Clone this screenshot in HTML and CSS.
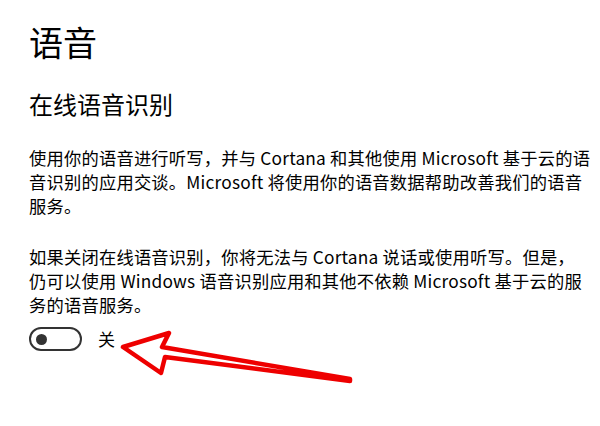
FILE: index.html
```html
<!DOCTYPE html>
<html lang="zh-CN">
<head>
<meta charset="utf-8">
<link rel="stylesheet" href="styles.css">
</head>
<body>
<main class="page">
  <h1 class="title">语音</h1>
  <h2 class="subtitle">在线语音识别</h2>
  <p class="para">使用你的语音进行听写，并与 Cortana 和其他使用 Microsoft 基于云的语<br>音识别的应用交谈。Microsoft 将使用你的语音数据帮助改善我们的语音<br>服务。</p>
  <p class="para">如果关闭在线语音识别，你将无法与 Cortana 说话或使用听写。但是，<br>仍可以使用 Windows 语音识别应用和其他不依赖 Microsoft 基于云的服<br>务的语音服务。</p>
  <div class="toggle-row">
    <span class="toggle"><span class="knob"></span></span>
    <span class="toggle-label">关</span>
  </div>
</main>
<svg class="arrow" width="600" height="426" viewBox="0 0 600 426">
  <polygon points="123,347 169,333 162,347 350,379 350,381 165,357 161,373" fill="#fff" stroke="#ee0000" stroke-width="4.5" stroke-linejoin="round"/>
</svg>
</body>
</html>
```
FILE: styles.css
```css
html, body {
  margin: 0;
  padding: 0;
  background: #fff;
}
body {
  width: 600px;
  height: 426px;
  overflow: hidden;
  position: relative;
  font-family: "Noto Sans CJK SC", "Noto Sans", sans-serif;
  color: #000;
}
.page {
  padding: 22px 0 0 29px;
}
.title {
  margin: 0;
  font-size: 34px;
  line-height: 40px;
  font-weight: 400;
}
.subtitle {
  margin: 26px 0 0;
  font-size: 24px;
  line-height: 32px;
  font-weight: 400;
}
.para {
  margin: 26px 0 0;
  font-size: 17.3px;
  letter-spacing: 0.2px;
  line-height: 24px;
  white-space: nowrap;
}
.para + .para {
  margin-top: 27px;
}
.toggle-row {
  margin-top: 10px;
  display: flex;
  align-items: center;
  gap: 16px;
}
.toggle {
  box-sizing: border-box;
  width: 53px;
  height: 24px;
  border: 2px solid #333;
  border-radius: 12px;
  display: flex;
  align-items: center;
  padding-left: 5px;
}
.knob {
  width: 11px;
  height: 11px;
  border-radius: 50%;
  background: #333;
}
.toggle-label {
  font-size: 17px;
  line-height: 24px;
}
.arrow {
  position: absolute;
  left: 0;
  top: 0;
  pointer-events: none;
}
```
